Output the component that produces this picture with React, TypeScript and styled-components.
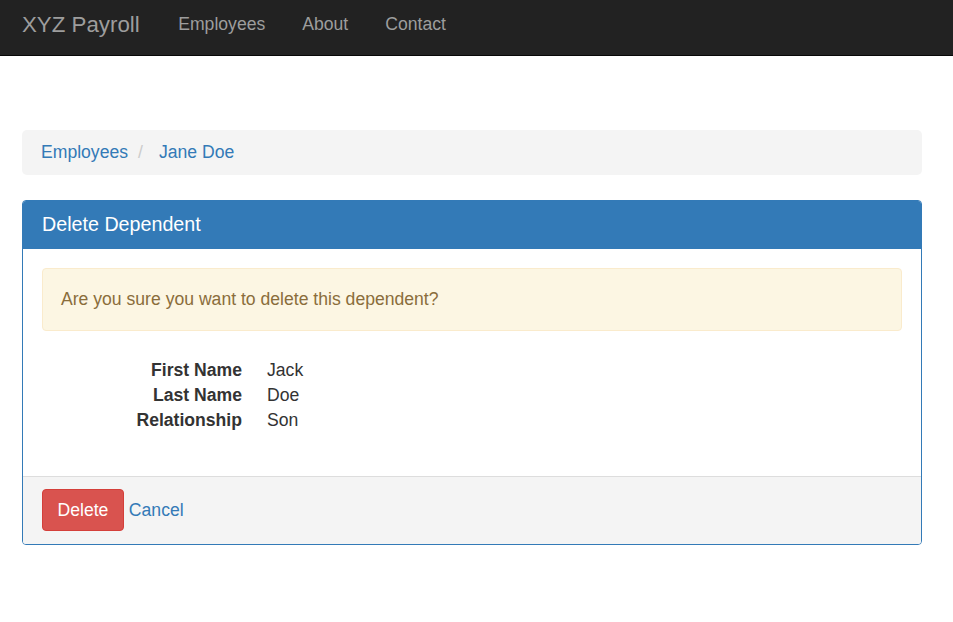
import styled, { createGlobalStyle } from 'styled-components';

const GlobalStyle = createGlobalStyle`
  html, body {
    margin: 0;
    padding: 0;
    background: #fff;
  }
  body {
    font-family: 'Liberation Sans', Arial, sans-serif;
    font-size: 17.6px;
    line-height: 25px;
    color: #333;
  }
`;

const Navbar = styled.nav`
  height: 55px;
  background: #222;
  border-bottom: 1px solid #080808;
`;

const NavInner = styled.div`
  display: flex;
  align-items: flex-start;
  padding: 12px 0 0 22px;
`;

const Brand = styled.a`
  font-size: 22.3px;
  line-height: 25px;
  color: #9d9d9d;
  text-decoration: none;
  margin-right: 20px;
`;

const NavLink = styled.a`
  font-size: 17.6px;
  line-height: 25px;
  color: #9d9d9d;
  text-decoration: none;
  padding: 0 18.5px;
`;

const Container = styled.div`
  width: 900px;
  margin: 74px 0 0 22px;
`;

const Breadcrumb = styled.ol`
  display: flex;
  list-style: none;
  margin: 0 0 25px;
  padding: 10px 19px;
  background: #f4f4f4;
  border-radius: 5px;
`;

const Crumb = styled.li`
  display: flex;
  & + &::before {
    content: '/';
    color: #ccc;
    margin: 0 16px 0 10px;
  }
`;

const Link = styled.a`
  color: #337ab7;
  text-decoration: none;
`;

const Panel = styled.section`
  border: 1px solid #337ab7;
  border-radius: 4px;
  overflow: hidden;
`;

const PanelHeading = styled.div`
  height: 48px;
  padding: 0 19px;
  background: #337ab7;
  color: #fff;
`;

const PanelTitle = styled.h3`
  margin: 0;
  font-size: 19.7px;
  font-weight: normal;
  line-height: 47px;
`;

const PanelBody = styled.div`
  padding: 19px 19px 21px;
`;

const Alert = styled.div`
  padding: 18px;
  margin-bottom: 27px;
  background: #fcf6e3;
  border: 1px solid #faebcc;
  border-radius: 4px;
  color: #8a6d3b;
`;

const DetailList = styled.dl`
  display: grid;
  grid-template-columns: 200px 1fr;
  column-gap: 25px;
  margin: 0 0 22px;
`;

const Term = styled.dt`
  font-weight: bold;
  text-align: right;
`;

const Detail = styled.dd`
  margin: 0;
`;

const PanelFooter = styled.div`
  display: flex;
  align-items: center;
  gap: 5px;
  padding: 12px 19px 13px;
  background: #f4f4f4;
  border-top: 1px solid #ddd;
`;

const DangerButton = styled.button`
  font-family: inherit;
  font-size: 17.6px;
  line-height: 25px;
  padding: 7.5px 14.5px;
  color: #fff;
  background: #d9534f;
  border: 1px solid #d43f3a;
  border-radius: 4px;
  cursor: pointer;
`;

const details = [
  { label: 'First Name', value: 'Jack' },
  { label: 'Last Name', value: 'Doe' },
  { label: 'Relationship', value: 'Son' },
];

const App = () => (
  <>
    <GlobalStyle />
    <Navbar>
      <NavInner>
        <Brand href='#'>XYZ Payroll</Brand>
        <NavLink href='#'>Employees</NavLink>
        <NavLink href='#'>About</NavLink>
        <NavLink href='#'>Contact</NavLink>
      </NavInner>
    </Navbar>
    <Container>
      <Breadcrumb>
        <Crumb><Link href='#'>Employees</Link></Crumb>
        <Crumb><Link href='#'>Jane Doe</Link></Crumb>
      </Breadcrumb>
      <Panel>
        <PanelHeading>
          <PanelTitle>Delete Dependent</PanelTitle>
        </PanelHeading>
        <PanelBody>
          <Alert>Are you sure you want to delete this dependent?</Alert>
          <DetailList>
            {details.map((d) => (
              <>
                <Term key={`${d.label}-t`}>{d.label}</Term>
                <Detail key={`${d.label}-d`}>{d.value}</Detail>
              </>
            ))}
          </DetailList>
        </PanelBody>
        <PanelFooter>
          <DangerButton type='button'>Delete</DangerButton>
          <Link href='#'>Cancel</Link>
        </PanelFooter>
      </Panel>
    </Container>
  </>
);

export default App;
